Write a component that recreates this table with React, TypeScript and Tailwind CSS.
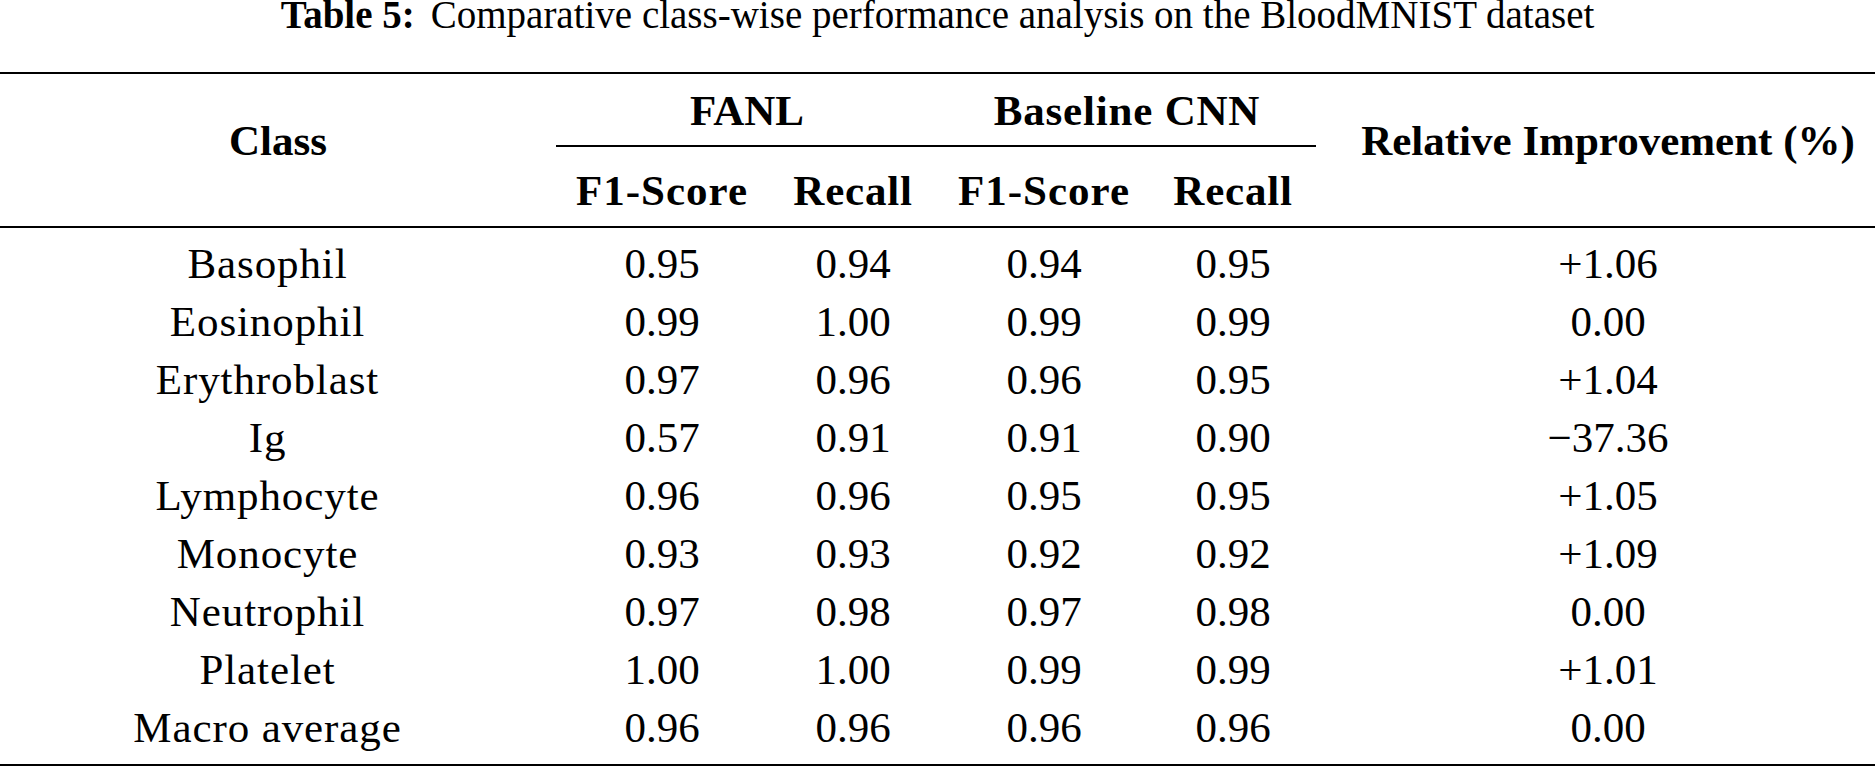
const ROWS: string[][] = [
  ['Basophil', '0.95', '0.94', '0.94', '0.95', '+1.06'],
  ['Eosinophil', '0.99', '1.00', '0.99', '0.99', '0.00'],
  ['Erythroblast', '0.97', '0.96', '0.96', '0.95', '+1.04'],
  ['Ig', '0.57', '0.91', '0.91', '0.90', '\u221237.36'],
  ['Lymphocyte', '0.96', '0.96', '0.95', '0.95', '+1.05'],
  ['Monocyte', '0.93', '0.93', '0.92', '0.92', '+1.09'],
  ['Neutrophil', '0.97', '0.98', '0.97', '0.98', '0.00'],
  ['Platelet', '1.00', '1.00', '0.99', '0.99', '+1.01'],
  ['Macro average', '0.96', '0.96', '0.96', '0.96', '0.00'],
];

const COLS = 'grid grid-cols-[556px_212px_170px_212px_166px_584px]';

export default function App() {
  return (
    <div className="h-[767px] w-[1875px] overflow-hidden bg-white text-black font-['Liberation_Serif',serif]">
      {/* Caption */}
      <div className="h-[72px] text-center text-[39px] leading-[30px]">
        <span className="inline-block font-bold">Table 5:</span>
        <span className="ml-[16px] inline-block">
          Comparative class-wise performance analysis on the BloodMNIST dataset
        </span>
      </div>

      <div className="h-[2px] bg-black" />

      {/* Header */}
      <div className={`${COLS} grid-rows-[71px_2px_79px] text-[43px] font-bold leading-[58px]`}>
        <div className="col-start-1 row-span-3 row-start-1 pt-[38px] text-center">Class</div>
        <div className="col-span-2 col-start-2 row-start-1 pt-[8px] text-center">FANL</div>
        <div className="col-span-2 col-start-4 row-start-1 pt-[8px] text-center tracking-[0.8px]">
          Baseline CNN
        </div>
        <div className="col-start-6 row-span-3 row-start-1 pt-[38px] text-center">
          Relative Improvement (%)
        </div>
        <div className="col-span-4 col-start-2 row-start-2 bg-black" />
        <div className="col-start-2 row-start-3 pt-[15px] text-center tracking-[1px]">F1-Score</div>
        <div className="col-start-3 row-start-3 pt-[15px] text-center tracking-[0.8px]">Recall</div>
        <div className="col-start-4 row-start-3 pt-[15px] text-center tracking-[1px]">F1-Score</div>
        <div className="col-start-5 row-start-3 pt-[15px] text-center tracking-[0.8px]">Recall</div>
      </div>

      <div className="h-[2px] bg-black" />

      {/* Body */}
      <div className="pb-[7px] pt-[7px] text-[43px] leading-[58px]">
        {ROWS.map((row) => (
          <div key={row[0]} className={COLS}>
            {row.map((cell, i) => (
              <div
                key={i}
                className={`whitespace-nowrap text-center ${i === 0 ? 'pr-[21px] tracking-[0.9px]' : ''}`}
              >
                {cell}
              </div>
            ))}
          </div>
        ))}
      </div>

      <div className="h-[2px] bg-black" />
    </div>
  );
}
